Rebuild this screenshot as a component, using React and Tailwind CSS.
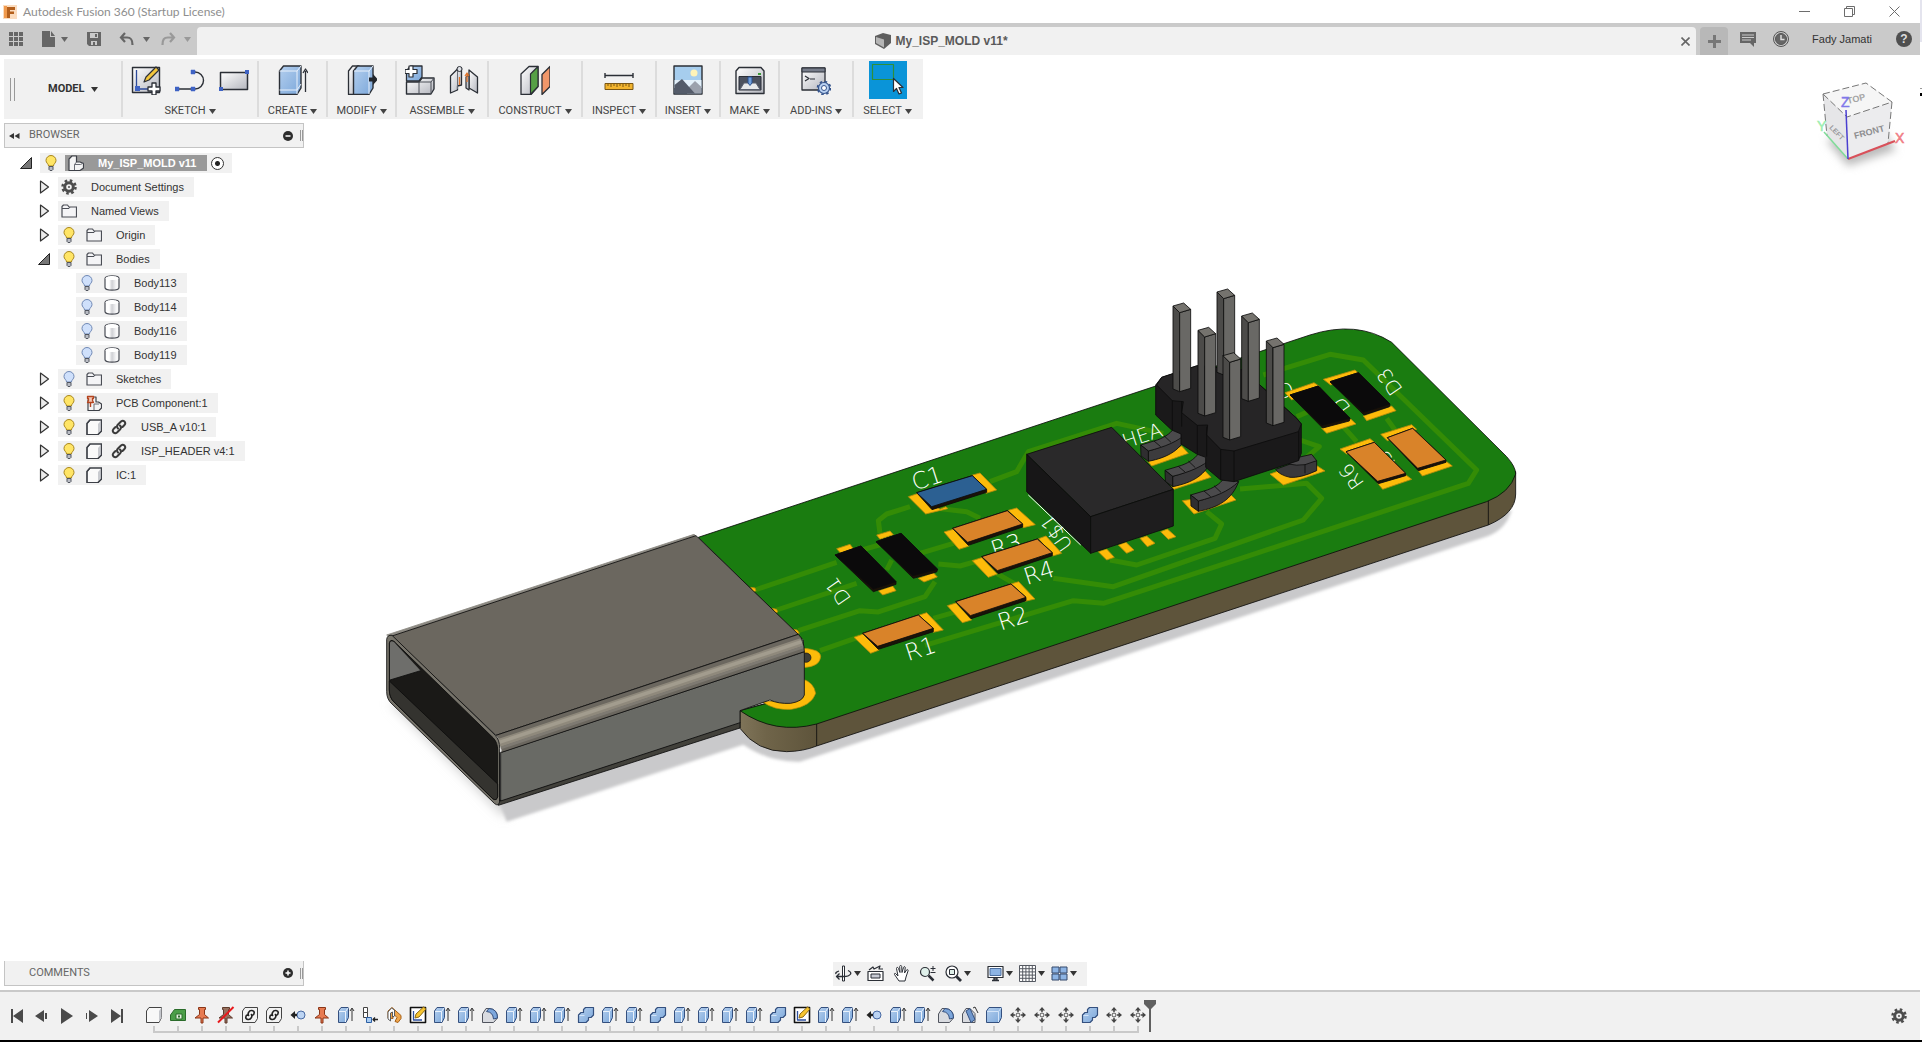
// ============================================================
// FUSION WORKSPACE
// Title bar, toolbar, browser tree, model canvas and timeline
// ============================================================

import { useState } from 'react';

// ---------- shared bits ----------

const Caret = ({ className = '' }) => (
  <svg viewBox="0 0 7 5" className={`w-[7px] h-[5px] shrink-0 ${className}`} fill="currentColor">
    <path d="M0 0h7L3.5 5z" />
  </svg>
);

const Svg = ({ size = 30, className = '', children }) => (
  <svg
    viewBox={`0 0 ${size} ${size}`}
    width={size}
    height={size}
    className={`shrink-0 ${className}`}
    fill="none"
    stroke="#2b2f36"
    strokeLinejoin="round"
  >
    {children}
  </svg>
);

const Gradients = () => (
  <svg className="absolute w-0 h-0" aria-hidden="true">
    <defs>
      <linearGradient id="blue" x1="0" y1="0" x2="1" y2="1">
        <stop offset="0" stopColor="#b4cfee" />
        <stop offset="1" stopColor="#7ba7da" />
      </linearGradient>
      <linearGradient id="grey" x1="0" y1="0" x2="1" y2="1">
        <stop offset="0" stopColor="#ffffff" />
        <stop offset="1" stopColor="#b4b6be" />
      </linearGradient>
      <linearGradient id="cylinder" x1="0" y1="0" x2="1" y2="0">
        <stop offset="0.3" stopColor="#ffffff" />
        <stop offset="0.5" stopColor="#cfd0d4" />
        <stop offset="0.8" stopColor="#f7f7f8" />
      </linearGradient>
    </defs>
  </svg>
);

// ---------- toolbar icons ----------

const SketchIcon = () => (
  <Svg>
    <path d="M1.500 2.500h27v25h-27z" fill="url(#grey)" strokeWidth="1.4" />
    <path d="M5.500 5v19H17" stroke="#2c4a9a" strokeWidth="1.3" />
    <path d="M4 21h5v5H4z" fill="#3f63c4" stroke="none" />
    <path d="M13 17l2-5L25 2l3 3-10 10z" fill="#f3c63c" strokeWidth="1.2" />
    <path d="M21 18h4v4h4v4h-4v4h-4v-4h-4v-4h4z" fill="#fff" strokeWidth="1.3" />
  </Svg>
);

const LineIcon = () => (
  <Svg>
    <path d="M2 24h18a8.500 8.500 0 0 0 0-17h-2" strokeWidth="1.4" />
    <path d="M0 22h4v4H0zM16 22h4v4h-4zM16 5h4v4h-4z" fill="#3f63c4" stroke="#3f63c4" strokeWidth="0.5" />
  </Svg>
);

const RectIcon = () => (
  <Svg>
    <path d="M1.500 7.500h27v17h-27z" fill="url(#grey)" strokeWidth="1.5" />
    <path d="M0 22h4v4H0zM26 5h4v4h-4z" fill="#3f63c4" stroke="none" />
  </Svg>
);

const CreateIcon = () => (
  <Svg>
    <path d="M1.500 6l4-5H23v22l-4 6.500H1.500z" fill="url(#blue)" strokeWidth="1.4" />
    <path d="M1.500 6H19v23M19 6l4-5M1.500 25H19l4-6" stroke="#e9f1fb" />
    <path d="M27.500 27V6M25 8l2.500-4L30 8" strokeWidth="1.300" />
  </Svg>
);

const ModifyIcon = () => (
  <Svg>
    <path d="M1.500 6l4-5H12v22l-4 6.500H1.500z" fill="url(#grey)" strokeWidth="1.3" />
    <path d="M6.500 6l4-5H26v22l-4 6.500H6.500z" fill="url(#blue)" strokeWidth="1.4" />
    <path d="M7 6h15v23M22 6l4-5" stroke="#e9f1fb" />
    <path d="M22 12.500h4V9l5 5.500-5 5.500v-3.500h-4z" fill="#22262c" stroke="none" />
  </Svg>
);

const AssembleIcon = () => (
  <Svg>
    <path d="M1.500 6l4-5H17v11l-3 4H1.500z" fill="url(#blue)" strokeWidth="1.3" />
    <path d="M14 17l3-4h12v11l-3 5H1.500V17z" fill="url(#grey)" strokeWidth="1.4" />
    <path d="M14 17v12M14 17h12l3-4M26 17v12" stroke="#4a4e57" />
    <path d="M4 1h4v3.500h4v4H8V12H4V8.500H0v-4h4z" fill="#fff" strokeWidth="1.2" />
  </Svg>
);

const JointIcon = () => (
  <Svg>
    <path d="M1.500 11l7-7 4-1v17l-4 1v4l-7 3z" fill="url(#grey)" strokeWidth="1.300" />
    <path d="M20 5l8.500 7v16L20 23z" fill="url(#grey)" strokeWidth="1.300" />
    <path d="M20 10l-3 2v11l3 2z" fill="#c5c8cf" strokeWidth="1.200" />
    <path d="M8.500 4v20" stroke="#6a6e77" />
    <ellipse cx="10.500" cy="4" rx="2.500" ry="2.500" fill="#dfe1e6" />
    <path d="M10.500 20V12M18 17V9M16 11l2-3 2 3" stroke="#e0752d" strokeWidth="1.300" />
  </Svg>
);

const ConstructIcon = () => (
  <Svg>
    <path d="M1 9l8-7.500h9v20L11 29.500H1z" fill="url(#grey)" strokeWidth="1.3" />
    <path d="M10.500 9L18 1.500v20l-7.500 8z" fill="#56a046" strokeWidth="1.2" />
    <path d="M22 9.500l8-8v20l-8 8z" fill="#f0976a" strokeWidth="1.3" />
  </Svg>
);

const InspectIcon = () => (
  <Svg>
    <path d="M1 8v5M29 8v5M1 10.500h28" strokeWidth="1.400" />
    <path d="M1 18.500h28v6H1z" fill="#f2b42e" stroke="#7a5613" />
    <path d="M4 19v2M7 19v3M10 19v2M13 19v3M16 19v2M19 19v3M22 19v2M25 19v3" stroke="#7a5613" />
  </Svg>
);

const InsertIcon = () => (
  <Svg>
    <path d="M1 1h28v28H1z" fill="#a6cdee" strokeWidth="1.400" />
    <path d="M1.500 15h27v8h-27z" fill="#e3f0fa" stroke="none" />
    <circle cx="21" cy="8" r="3.500" fill="#fff3b8" stroke="none" />
    <path d="M14 24l8-8 6.500 6v6.500H14z" fill="#9ba1ad" stroke="none" />
    <path d="M1.500 20L9 14l13 14.500H1.500z" fill="#545b69" stroke="none" />
  </Svg>
);

const MakeIcon = () => (
  <Svg>
    <path d="M1 6l3-3.500h22L29 6v22.500H1z" fill="url(#grey)" strokeWidth="1.400" />
    <path d="M4 11.500h22V25H4z" fill="#4b5160" />
    <path d="M9 18h12l4 6.500H5z" fill="#e6e8ec" stroke="#5a6070" />
    <path d="M13 12h4v6l-2 2.500-2-2.500z" fill="#6f9fdd" stroke="#2b4f8d" />
    <path d="M23 8h3v2h-3z" fill="#3c9a3a" stroke="none" />
  </Svg>
);

const AddInsIcon = () => (
  <Svg>
    <path d="M1 3h23v22H1z" fill="url(#grey)" strokeWidth="1.300" />
    <path d="M1 3h23v4H1z" fill="#767c8a" />
    <path d="M4 11l4 2.500L4 16M9 14h5" strokeWidth="1.200" />
    <circle cx="23" cy="23" r="5.500" fill="#b8d0f0" stroke="#35548c" strokeWidth="1.200" />
    <circle cx="23" cy="23" r="6.500" stroke="#35548c" strokeWidth="1.600" strokeDasharray="2.500 2.600" />
    <circle cx="23" cy="23" r="2.500" fill="#fff" stroke="#35548c" />
  </Svg>
);

const SelectIcon = () => (
  <Svg size={38} className="bg-[#0a94d8]">
    <path d="M3.500 3.500h21v15h-21z" stroke="#2f8f3a" strokeWidth="1.200" />
    <path d="M24.500 17.500v13l3-3 2.500 5.500 2.500-1-2.500-5.500h4z" fill="#fff" strokeWidth="1.200" />
  </Svg>
);

const TOOL_GROUPS = [
  { name: 'SKETCH', icons: [SketchIcon, LineIcon, RectIcon], width: 'w-[136px]' },
  { name: 'CREATE', icons: [CreateIcon], width: 'w-[69px]' },
  { name: 'MODIFY', icons: [ModifyIcon], width: 'w-[69px]' },
  { name: 'ASSEMBLE', icons: [AssembleIcon, JointIcon], width: 'w-[92px]' },
  { name: 'CONSTRUCT', icons: [ConstructIcon], width: 'w-[94px]' },
  { name: 'INSPECT', icons: [InspectIcon], width: 'w-[74px]' },
  { name: 'INSERT', icons: [InsertIcon], width: 'w-[64px]' },
  { name: 'MAKE', icons: [MakeIcon], width: 'w-[59px]' },
  { name: 'ADD-INS', icons: [AddInsIcon], width: 'w-[74px]' },
  { name: 'SELECT', icons: [SelectIcon], width: 'w-[69px]' },
];

// ---------- browser tree icons ----------

const Bulb = ({ on = true }) => (
  <Svg size={16}>
    <path
      d="M8 .5a5 5 0 0 0-5 5c0 2.500 2.300 3 2.600 5.500h4.800C10.700 8.500 13 8 13 5.500a5 5 0 0 0-5-5z"
      fill={on ? '#ffe566' : '#cfe0fb'}
      stroke={on ? '#a8861c' : '#6f88b5'}
    />
    <path d="M6 11.500h4v3l-1 1H7l-1-1z" fill="#b9bcc4" stroke="#50545e" />
  </Svg>
);

const Folder = () => (
  <Svg size={16}>
    <path d="M1 14V3.500L2.500 2h4L8 4h7.500v10z" fill="#f4f4f6" stroke="#4a4d55" strokeWidth="1.200" />
    <path d="M1 5.500h7L9 4" stroke="#4a4d55" />
  </Svg>
);

const Cylinder = () => (
  <Svg size={16}>
    <path d="M1 3.500C1 0 15 0 15 3.500v9c0 3.500-14 3.500-14 0z" fill="url(#cylinder)" stroke="#4a4d55" strokeWidth="1.200" />
    <path d="M1.500 3.500C1.500 0 14.500 0 14.500 3.500c0 2-13 2-13 0z" fill="#fff" stroke="none" />
  </Svg>
);

const Box = () => (
  <Svg size={16}>
    <path d="M1 4.500L4 1h11.500v11L12 15.500H1z" fill="#fafafa" stroke="#3d4047" strokeWidth="1.200" />
    <path d="M12 5v10.500L15.500 12V1z" fill="#c9cbd0" stroke="none" />
    <path d="M1 4.500L4 1h11.500v11L12 15.500H1z" stroke="#3d4047" strokeWidth="1.200" />
  </Svg>
);

const Component = () => (
  <Svg size={16}>
    <path d="M1 4l3-3h4.500v6H12l3.500 1.500V13L12 15.500H1z" fill="#f4f4f4" stroke="#3d4047" strokeWidth="1.200" />
    <path d="M6.500 15V9.500L8.500 7M6.500 9.500h6l3-1.500" stroke="#6a6d75" />
  </Svg>
);

const PinnedComponent = () => (
  <Svg size={16}>
    <path d="M2 5l3-3h5v5h2.500l3 2v4L13 15.500H2z" fill="#f4f4f4" stroke="#3d4047" strokeWidth="1.200" />
    <path d="M8 15V9h5" stroke="#6a6d75" />
    <path d="M1.500 1.500h6v2h-1v2l1 2h-6l1-2v-2h-1z" fill="#f4c9b8" stroke="#b4441f" strokeWidth="1.300" />
    <path d="M4.500 8v4" stroke="#b4441f" strokeWidth="1.400" />
  </Svg>
);

const Gear = ({ size = 16 }) => (
  <svg viewBox="0 0 16 16" width={size} height={size} fill="none" stroke="#4d4d4d" className="shrink-0">
    <circle cx="8" cy="8" r="4.300" strokeWidth="3" />
    <circle cx="8" cy="8" r="6.500" strokeWidth="2.500" strokeDasharray="2.550 2.550" />
    <circle cx="8" cy="8" r="1" fill="#4d4d4d" stroke="none" />
  </svg>
);

const Link = () => (
  <Svg size={16}>
    <g stroke="#3b3b3b" strokeWidth="2" strokeLinecap="round">
      <path d="M7 9.500C5.500 8 6 6.500 7 5.500l3-3c2.500-2 5.500 1 3.500 3.500l-2 2" />
      <path d="M9 6.500c1.500 1.500 1 3 0 4l-3 3c-2.500 2-5.500-1-3.500-3.500l2-2" />
    </g>
  </Svg>
);

const TREE = [
  { name: 'Document Settings', level: 1, arrow: 'closed', icons: [Gear] },
  { name: 'Named Views', level: 1, arrow: 'closed', icons: [Folder] },
  { name: 'Origin', level: 1, arrow: 'closed', bulb: 'on', icons: [Folder] },
  { name: 'Bodies', level: 1, arrow: 'open', bulb: 'on', icons: [Folder] },
  { name: 'Body113', level: 2, bulb: 'off', icons: [Cylinder] },
  { name: 'Body114', level: 2, bulb: 'off', icons: [Cylinder] },
  { name: 'Body116', level: 2, bulb: 'off', icons: [Cylinder] },
  { name: 'Body119', level: 2, bulb: 'off', icons: [Cylinder] },
  { name: 'Sketches', level: 1, arrow: 'closed', bulb: 'off', icons: [Folder] },
  { name: 'PCB Component:1', level: 1, arrow: 'closed', bulb: 'on', icons: [PinnedComponent] },
  { name: 'USB_A v10:1', level: 1, arrow: 'closed', bulb: 'on', icons: [Box, Link] },
  { name: 'ISP_HEADER v4:1', level: 1, arrow: 'closed', bulb: 'on', icons: [Box, Link] },
  { name: 'IC:1', level: 1, arrow: 'closed', bulb: 'on', icons: [Box] },
];

const Arrow = ({ kind }) => (
  <button aria-label={kind === 'open' ? 'Collapse' : 'Expand'} className="w-7 h-5 flex items-center justify-center">
    <Svg size={14}>
      {kind === 'open' ? (
        <path d="M12.500 1.500v11h-11z" fill="#777" stroke="#222" />
      ) : (
        <path d="M3.500 1l8 6-8 6z" fill="#ececec" stroke="#333" strokeWidth="1.200" />
      )}
    </Svg>
  </button>
);

function TreeRow({ item }) {
  return (
    <li className={`h-6 flex items-center ${item.level === 2 ? 'pl-12' : 'pl-[30px]'}`}>
      {item.arrow ? <Arrow kind={item.arrow} /> : <span className="w-7" />}
      <div className="h-5 flex items-center bg-[#f1f1f1] pr-2.5">
        {item.bulb && (
          <button aria-label={`Toggle ${item.name}`} className="w-[21px] flex justify-end pr-0.5">
            <Bulb on={item.bulb === 'on'} />
          </button>
        )}
        {item.icons.map((Icon, i) => (
          <span key={i} className={`flex justify-end ${i > 0 ? 'w-[25px]' : item.bulb ? 'w-[23px]' : 'w-[19px]'}`}>
            <Icon />
          </span>
        ))}
        <span className="pl-3.5 whitespace-nowrap">{item.name}</span>
      </div>
    </li>
  );
}

// ---------- title bar and document tabs ----------

function TitleBar() {
  return (
    <div className="h-[23px] flex items-center bg-white pl-[3px] pr-5">
      <svg viewBox="0 0 14 14" className="w-3.5 h-3.5">
        <path d="M0 0h14v14H0z" fill="#fbdcbf" />
        <path d="M4 2h8v3H7v1.500h4v2.500H7V13H4z" fill="#b35f1c" />
        <path d="M1 1h3v12H1z" fill="#f09a4d" />
      </svg>
      <h1 className="pl-1.5 flex-1 text-xs text-[#8e8e8e] font-['Lato',sans-serif]">
        Autodesk Fusion 360 (Startup License)
      </h1>
      <div className="flex items-center gap-[34px] text-[#6d6d6d]">
        <button aria-label="Minimize">
          <svg viewBox="0 0 11 11" className="w-[11px] h-[11px]" stroke="currentColor"><path d="M0 5.500h11" /></svg>
        </button>
        <button aria-label="Restore">
          <svg viewBox="0 0 11 11" className="w-[11px] h-[11px]" fill="none" stroke="currentColor">
            <path d="M.5 2.500h8v8h-8zM2.500 2.500v-2h8v8h-2" />
          </svg>
        </button>
        <button aria-label="Close">
          <svg viewBox="0 0 11 11" className="w-[11px] h-[11px]" stroke="currentColor"><path d="M.5.5l10 10M10.500.5l-10 10" /></svg>
        </button>
      </div>
    </div>
  );
}

function TabBar() {
  return (
    <div className="h-8 flex items-stretch bg-[#cacaca] text-[#666]">
      <div className="w-[197px] flex items-center pl-2 shrink-0">
        <button aria-label="Data panel">
          <svg viewBox="0 0 16 16" className="w-4 h-4" fill="currentColor">
            <path d="M1 1h4v4H1zM6 1h4v4H6zM11 1h4v4h-4zM1 6h4v4H1zM6 6h4v4H6zM11 6h4v4h-4zM1 11h4v4H1zM6 11h4v4H6zM11 11h4v4h-4z" />
          </svg>
        </button>
        <button aria-label="File" className="ml-[17px] flex items-center gap-1">
          <svg viewBox="0 0 16 16" className="w-4 h-4" fill="currentColor"><path d="M1 0h8v6h5v10H1zM10 0l4 5h-4z" /></svg>
          <Caret />
        </button>
        <button aria-label="Save" className="ml-[18px]">
          <svg viewBox="0 0 16 16" className="w-4 h-4" fill="currentColor" fillRule="evenodd">
            <path d="M1 1h14v14H3l-2-2zM4 2v5h8V2zM5 10v4h2v-3h2v3h2v-4zM9 3h2v3H9z" />
          </svg>
        </button>
        <button aria-label="Undo" className="ml-[17px] flex items-center gap-2">
          <svg viewBox="0 0 16 16" className="w-4 h-4" fill="none" stroke="currentColor" strokeWidth="2.200">
            <path d="M6 2L2 6.500 6 11M2.500 6.500H8c4 0 5.500 2 5.500 7.500" />
          </svg>
          <Caret />
        </button>
        <button aria-label="Redo" className="ml-2.5 flex items-center gap-2 text-[#999]">
          <svg viewBox="0 0 16 16" className="w-4 h-4" fill="none" stroke="currentColor" strokeWidth="2.200">
            <path d="M10 2l4 4.500-4 4.500M13.500 6.500H8c-4 0-5.500 2-5.500 7.500" />
          </svg>
          <Caret />
        </button>
      </div>

      {/* Active document */}
      <div className="flex-1 mt-1 flex items-center bg-[#f1f1f1] rounded-t-sm pr-1.5">
        <div className="flex-1 flex items-center justify-center gap-1 pl-1 text-[#5a5a5a]">
          <svg viewBox="0 0 17 16" className="w-[17px] h-4">
            <path d="M0 3l8-3 8 2v8l-7 6-9-5z" fill="#5f5f5f" />
            <path d="M1 4l8 2.500v8L1 10z" fill="#b5b5b5" />
          </svg>
          <span className="text-xs font-bold">My_ISP_MOLD v11*</span>
        </div>
        <button aria-label="Close document" className="w-[9px]">
          <svg viewBox="0 0 9 9" className="w-[9px] h-[9px]" stroke="currentColor" strokeWidth="1.600"><path d="M.5.5l8 8M8.500.5l-8 8" /></svg>
        </button>
      </div>

      <button aria-label="New document" className="mt-1 ml-1 w-7 flex items-center justify-center bg-[#b8b8b8] rounded-t-sm">
        <svg viewBox="0 0 13 13" className="w-[13px] h-[13px]" stroke="#777" strokeWidth="3"><path d="M6.500 0v13M0 6.500h13" /></svg>
      </button>
      <div className="flex items-center pl-3 pr-2">
        <button aria-label="Notifications">
          <svg viewBox="0 0 16 16" className="w-4 h-4">
            <path d="M0 1h16v11h-2v4l-4-4H0z" fill="#666" />
            <path d="M2 4h12M2 6.500h12M2 9h9" stroke="#cacaca" />
          </svg>
        </button>
        <button aria-label="Job status" className="ml-[17px]">
          <svg viewBox="0 0 16 16" className="w-4 h-4" fill="none" stroke="#555">
            <circle cx="8" cy="8" r="7.500" />
            <circle cx="8" cy="8" r="5.500" fill="#666" />
            <path d="M8 4v4.500h3.500" stroke="#ddd" strokeWidth="1.500" />
          </svg>
        </button>
        <button className="ml-[23px] text-[11px] text-[#333] whitespace-nowrap">Fady Jamati</button>
        <button aria-label="Help" className="ml-6 w-4 h-4 rounded-full bg-[#4f4f4f] text-[#ddd] text-xs leading-4 font-bold">?</button>
      </div>
    </div>
  );
}

function Toolbar() {
  return (
    <nav className="mt-1 ml-1 h-[60px] w-fit flex items-center bg-[#f1f1f1] font-['Roboto',sans-serif] text-[11px] text-[#444]">
      <div className="h-14 w-[119px] flex items-center border-r-2 border-[#dcdcdc]">
        <span className="ml-1.5 w-[5px] h-[23px] border-x border-[#999]" />
        <button className="ml-[33px] flex items-center gap-1.5 font-bold text-[#333]">
          MODEL <Caret />
        </button>
      </div>
      {TOOL_GROUPS.map((group) => (
        <div
          key={group.name}
          className={`h-14 flex flex-col items-center border-r-2 border-[#dcdcdc] last:border-transparent ${group.width}`}
        >
          <div className="h-[38px] shrink-0 flex items-center gap-3.5">
            {group.icons.map((Icon, i) => (
              <button key={i} className="flex" aria-label={`${group.name} tool ${i + 1}`}>
                <Icon />
              </button>
            ))}
          </div>
          <button className="h-3 mt-1.5 shrink-0 flex items-center gap-[3px] whitespace-nowrap">
            {group.name} <Caret />
          </button>
        </div>
      ))}
    </nav>
  );
}

function Browser() {
  return (
    <aside className="w-[300px] mt-1 ml-1">
      <div className="h-[25px] flex items-center bg-[#f1f1f1] border border-[#c4c4c4] font-['Roboto',sans-serif] text-[11px] text-[#666]">
        <button aria-label="Collapse browser" className="ml-1">
          <svg viewBox="0 0 11 6" className="w-[11px] h-1.5" fill="#333"><path d="M5 0v6L0 3zM10.500 0v6l-5-3z" /></svg>
        </button>
        <h2 className="ml-[9px] flex-1">BROWSER</h2>
        <button aria-label="Hide all">
          <svg viewBox="0 0 10 10" className="w-2.5 h-2.5"><circle cx="5" cy="5" r="5" fill="#2d2d2d" /><path d="M2.500 5h5" stroke="#fff" strokeWidth="1.500" /></svg>
        </button>
        <span className="ml-[7px] w-[3px] h-[11px] border-x border-[#999]" />
      </div>
      <ul className="mt-[3px] -ml-1 text-[11px] text-[#333]">
        <li className="h-6 flex items-center pl-3">
          <Arrow kind="open" />
          <div className="h-5 flex items-center bg-[#f1f1f1] pr-2">
            <button aria-label="Toggle root component" className="w-[21px] flex justify-end pr-0.5">
              <Bulb />
            </button>
            <span className="ml-1 h-4 flex items-center bg-[#999] pl-[3px] pr-[11px] text-white font-bold whitespace-nowrap">
              <Component />
              <span className="pl-3.5">My_ISP_MOLD v11</span>
            </span>
            <input
              type="radio"
              name="active-component"
              aria-label="Activate component"
              defaultChecked
              className="ml-1 appearance-none w-[13px] h-[13px] rounded-full border border-[#333] bg-white bg-[radial-gradient(circle,#222_2px,transparent_3px)]"
            />
          </div>
        </li>
        {TREE.map((item) => (
          <TreeRow key={item.name} item={item} />
        ))}
      </ul>
    </aside>
  );
}

// ---------- model drawing ----------
// The board is drawn in units of a third of a pixel.

const Poly = ({ p, fill, line = '#0c0c0c' }) => (
  <polygon points={p} fill={fill} stroke={line} strokeWidth="2.500" strokeLinejoin="round" />
);

const Pads = ({ list }) => list.map((p) => <Poly key={p} p={p} fill="#fdbb0a" line="#b58a0c" />);

const Chip = ({ top, side, color }) => (
  <>
    <Poly p={side} fill="#1b1208" />
    <Poly p={top} fill={color} />
  </>
);

const Label = ({ x, y, r = -18, size = 70, children }) => (
  <text
    transform={`translate(${x} ${y}) rotate(${r})`}
    fontSize={size}
    fontWeight="200"
    fill="#fff"
    fontFamily="DejaVu Sans, sans-serif"
  >
    {children}
  </text>
);

const PinPost = ({ x, y, bottom }) => (
  <>
    <Poly p={`${x},${y} ${x + 20},${y + 20} ${x + 20},${bottom} ${x},${bottom - 8}`} fill="#4c4b49" />
    <Poly p={`${x + 20},${y + 20} ${x + 53},${y + 10} ${x + 53},${bottom - 10} ${x + 20},${bottom}`} fill="#696865" />
    <Poly p={`${x},${y} ${x + 32},${y - 9} ${x + 53},${y + 10} ${x + 20},${y + 20}`} fill="#75736e" />
  </>
);

const Leg = ({ x, y }) => (
  <g transform={`translate(${x} ${y})`} stroke="#0c0c0c" strokeWidth="2.500" strokeLinejoin="round">
    <path d="M115 543C165 530 195 512 212 492L236 485C215 540 175 562 115 574z" fill="#3c3b3d" />
    <path d="M92 525L132 513C160 505 180 492 192 475L236 485C205 515 165 530 115 543z" fill="#4b4a4c" />
    <path d="M92 525L115 543V574L93 558z" fill="#2f2e30" />
    <path d="M132 513L152 530M162 497L183 517" fill="none" />
  </g>
);

function UsbShell() {
  return (
    <g transform="translate(0 690)">
      <Pads list={['1142,262 1155,264 1158,272 1150,276', '1207,325 1220,328 1223,336 1215,340', '1268,388 1282,390 1288,400 1278,404']} />
      <path d="M1300 445Q1352 448 1352 470Q1350 500 1300 503z" fill="#fdbb0a" stroke="#b58a0c" strokeWidth="2" />
      <ellipse cx="1308" cy="473" rx="15" ry="14" fill="#3d3d36" stroke="#111" strokeWidth="2" />
      <path d="M1178 606Q1215 632 1265 628Q1325 618 1337 580Q1332 548 1300 538L1296 596z" fill="#fdbb0a" stroke="#b58a0c" strokeWidth="2" />
      <g stroke="#0c0c0c" strokeWidth="2.500" strokeLinejoin="round">
        <path d="M385 903L1110 666V684L385 916z" fill="#42413b" />
        <path d="M392 757L1303 455V585Q1298 604 1262 610Q1225 612 1200 600L1110 632V668L392 903z" fill="#696a65" />
        <path d="M50 405L972 103L978 108L66 410z" fill="#8d8a83" stroke="#8d8a83" />
        <path d="M66 408L978 107L1285 403L378 706z" fill="#6b675f" />
        <path d="M378 706L1285 403Q1303 420 1303 455L395 757Q393 722 378 706z" fill="#6b675f" stroke="none" />
        <path d="M384 717L1291 415L1299 438L391 741z" fill="#8f897c" stroke="none" />
        <path d="M386 722L1293 420L1297 430L389 732z" fill="#a29c8e" stroke="none" />
        <path d="M391 740L1299 437L1301 445L393 748z" fill="#7e7a72" stroke="none" />
        <path d="M378 706L1285 403Q1303 420 1303 455L395 757" fill="none" />
        {/* mouth of the connector */}
        <path d="M50 418Q52 404 66 406L376 706Q389 720 389 745V905Q386 920 374 911L66 612Q50 598 50 575z" fill="#77746b" />
        <path d="M58 430Q60 416 72 424L370 714Q383 728 383 750V890Q380 904 368 896L72 606Q58 592 58 570z" fill="#1a1917" />
        <path d="M60 428Q62 420 72 426L152 512L60 540z" fill="#6e6e6b" stroke="none" />
        <path d="M58 543L383 852V890Q380 904 368 896L72 606Q58 592 58 570z" fill="#34332f" />
        <path d="M60 540L152 512M389 757V905" fill="none" />
      </g>
    </g>
  );
}

function Board() {
  return (
    <>
      <path
        d="M1110 1322V1375Q1160 1445 1250 1445Q1300 1444 1340 1428L3355 765Q3437 730 3437 672V605L3350 600L1400 1240z"
        fill="url(#boardEdge)"
        stroke="#0c0c0c"
        strokeWidth="2.500"
      />
      <path d="M1340 1362V1428M3355 690V765" stroke="#0c0c0c" strokeWidth="2.500" />
      <path
        d="M985 802L2820 195Q2960 150 3065 217L3410 560Q3437 590 3437 612Q3420 668 3350 695L1340 1362Q1215 1395 1110 1322L1300 1270V1110z"
        fill="#1a7c10"
        stroke="#0c0c0c"
        strokeWidth="2.500"
      />
    </>
  );
}

const Traces = () => (
  <g fill="none" stroke="#348c06" strokeWidth="15" strokeLinejoin="round">
    <g transform="translate(1320 390)">
      <path d="M-165 570L80 487M-100 630L140 550M-35 692L150 632L205 636L345 590L375 545M30 752L150 710M370 655L440 635" />
      <path d="M345 736L790 602L880 610L1300 473L1975 250L2000 210L1660 -120L1560 -137L1360 -75" />
      <path d="M730 535L910 560L1480 360L1535 295L1490 250L1290 267" />
      <path d="M900 480L980 495L1215 415L1235 372L1190 335" />
      <path d="M540 245L620 215L655 155L920 70L1060 100M210 400L205 362L230 342L300 320M380 325L470 335L510 355" />
      <path d="M330 460L430 430M385 492L450 498L520 478M560 520L620 555M120 460L260 420M230 510L245 480" />
    </g>
    <path d="M2790 510L2848 530L2800 570M2920 470L2960 515M3050 445L3075 480M2780 440L2850 410" />
  </g>
);

function SmallParts() {
  return (
    <>
      <g transform="translate(1320 390)">
        <Pads
          list={[
            '295,290 325,280 390,328 408,320 413,326 347,342', '485,226 510,219 560,270 528,280',
            '402,396 430,388 478,438 447,448', '595,331 620,324 676,374 640,383',
            '412,617 438,609 485,660 457,668', '603,552 626,545 675,597 645,604',
            '132,712 160,702 208,750 182,760', '326,646 350,638 400,690 370,697',
            '80,446 120,433 130,446 92,460', '205,572 248,558 258,572 218,585',
            '200,405 240,393 250,404 210,418', '325,535 370,518 382,531 342,546',
            '865,455 890,447 913,472 890,480', '925,435 948,427 972,450 950,460',
            '990,415 1010,408 1035,430 1012,440', '1052,395 1072,387 1098,410 1075,418',
          ]}
        />
        <Label x={552} y={474}>R3</Label>
        <Label x={790} y={436} r={-125} size={60}>U$1</Label>
        <Pads list={['487,482 515,473 562,522 535,532', '686,416 708,408 755,460 728,468']} />
        <Label x={314} y={272}>C1</Label>
        <Chip color="#2c6092" side="320,278 487,227 530,268 530,277 366,329" top="320,278 487,227 530,268 365,320" />
        <Chip color="#d98329" side="428,385 592,332 638,372 638,381 475,436" top="428,385 592,332 638,372 473,427" />
        <Chip color="#d98329" side="515,470 682,417 727,458 727,467 565,521" top="515,470 682,417 727,458 562,512" />
        <Chip color="#d98329" side="437,605 603,552 648,592 648,602 483,656" top="437,605 603,552 648,592 481,647" />
        <Chip color="#d98329" side="158,700 325,645 370,685 370,695 205,748" top="158,700 325,645 370,685 203,739" />
        <Chip color="#0b0a0b" side="75,465 153,438 258,545 258,553 190,575" top="75,465 153,438 258,545 190,567" />
        <Chip color="#0b0a0b" side="198,425 273,400 383,508 380,516 310,535" top="198,425 273,400 383,508 308,527" />
        <Label x={294} y={784}>R1</Label>
        <Label x={572} y={692}>R2</Label>
        <Label x={650} y={556}>R4</Label>
        <Label x={125} y={596} r={-125} size={60}>D1</Label>
        <Label x={944} y={146} size={60}>HEA</Label>
        <path d="M655 285L812 435" stroke="#fff" strokeWidth="3" />
        <Poly p="650,163 905,82 1090,268 842,350" fill="#2a292a" />
        <Poly p="650,163 842,350 842,460 650,275" fill="#171617" />
        <Poly p="842,350 1090,268 1090,378 842,460" fill="#1e1d1e" />
      </g>
      <g transform="translate(2220 0)">
        <Label x={512} y={388} size={60}>D</Label>
        <Label x={724} y={414} r={-125} size={60}>D</Label>
        <Label x={874} y={600} r={-125} size={60}>R5</Label>
        <Pads
          list={[
            '525,368 612,338 630,350 545,390', '635,475 722,447 738,462 650,490',
            '640,328 735,300 748,312 662,345', '760,438 845,408 858,422 770,452',
            '690,537 780,506 797,520 710,552', '803,640 888,615 905,628 818,658',
            '812,493 905,464 920,478 832,512', '925,602 1010,575 1027,588 937,618',
          ]}
        />
        <Chip color="#0b0a0b" side="540,375 625,348 720,445 718,453 638,474" top="540,375 625,348 720,445 636,466" />
        <Chip color="#0b0a0b" side="660,335 745,308 840,402 838,410 762,435" top="660,335 745,308 840,402 760,427" />
        <Chip color="#d98329" side="708,545 793,517 887,610 887,617 805,641" top="708,545 793,517 887,610 803,634" />
        <Chip color="#d98329" side="832,503 908,475 1008,570 1008,577 925,602" top="832,503 908,475 1008,570 923,595" />
        <Label x={880} y={358} r={-125} size={60}>D3</Label>
        <Label x={764} y={640} r={-125} size={60}>R6</Label>
      </g>
    </>
  );
}

function PinHeader() {
  return (
    <g transform="translate(2220 0)">
      <Pads
        list={[
          '112,572 215,528 235,550 125,588', '185,648 285,603 303,622 192,658',
          '217,692 360,672 378,690 252,732', '480,612 520,598 622,588 645,603 520,645',
        ]}
      />
      <g stroke="#0c0c0c" strokeWidth="2.500" strokeLinejoin="round">
        <path d="M497 598L560 575L620 572V602Q570 625 540 622Q508 615 497 598z" fill="#3a393b" />
        <path d="M565 562L605 553L620 572L585 584Q560 588 535 582z" fill="#4a494b" />
        <path d="M585 584V610" />
      </g>
      <Leg x={0} y={0} />
      <Leg x={73} y={76} />
      <Leg x={150} y={150} />
      <g stroke="#0c0c0c" strokeWidth="2.500" strokeLinejoin="round">
        <path
          d="M137 345L155 322L262 287L400 300L560 445L574 462V550L565 572L372 635L332 630L287 592V562L260 552L213 522V492L185 480L137 435z"
          fill="#1a191a"
        />
        <path
          d="M140 345L155 322L262 287L400 300L560 445L574 462L565 485L372 543L332 538L290 495L293 465L262 466L215 428L220 395L187 392z"
          fill="#262526"
        />
        <path d="M187 392V480M215 395V470M262 466V550M290 470V560M332 538V630M372 543V635M566 485V572" fill="none" />
      </g>
      <PinPost x={321} y={66} bottom={315} />
      <PinPost x={189} y={108} bottom={365} />
      <PinPost x={395} y={138} bottom={394} />
      <PinPost x={264} y={181} bottom={438} />
      <PinPost x={469} y={213} bottom={467} />
      <PinPost x={339} y={257} bottom={510} />
    </g>
  );
}

function ModelCanvas() {
  return (
    <svg
      viewBox="0 55 1920 935"
      className="absolute inset-0 w-full h-full"
      role="img"
      aria-label="USB programmer board model"
    >
      <defs>
        <linearGradient id="boardEdge" gradientUnits="userSpaceOnUse" x1="1110" y1="0" x2="1340" y2="0">
          <stop offset="0" stopColor="#7f7459" />
          <stop offset="0.35" stopColor="#6f6449" />
          <stop offset="1" stopColor="#5e543b" />
        </linearGradient>
        <filter id="soft" x="-10%" y="-10%" width="120%" height="120%">
          <feGaussianBlur stdDeviation="5" />
        </filter>
        <filter id="softer" x="-30%" y="-30%" width="160%" height="160%">
          <feGaussianBlur stdDeviation="16" />
        </filter>
      </defs>
      <g transform="translate(370 270) scale(0.333333)">
        <path d="M60 1300L400 1640L500 1560L140 1270z" fill="#d4d4d4" filter="url(#softer)" />
        <path
          d="M385 1590L410 1655L1120 1424Q1200 1478 1290 1475L3355 798Q3410 775 3425 720L1300 1380L1100 1360z"
          fill="#c9c9cb"
          filter="url(#soft)"
        />
        <Board />
        <Traces />
        <SmallParts />
        <UsbShell />
        <PinHeader />
      </g>
    </svg>
  );
}

function ViewCube() {
  return (
    <svg
      viewBox="0 0 100 100"
      className="absolute right-2 top-[25px] w-[100px] h-[100px]"
      role="img"
      aria-label="View cube"
      fontFamily="Liberation Sans, Arial, sans-serif"
      fontWeight="bold"
    >
      <defs>
        <filter id="cubeShadow" x="-30%" y="-30%" width="160%" height="160%">
          <feGaussianBlur stdDeviation="4" />
        </filter>
      </defs>
      <path d="M14 60L36 86L84 70L70 50z" fill="#bbb" filter="url(#cubeShadow)" />
      <path d="M11 14L54 3L80 22L35 37z" fill="#f6f6f6" />
      <path d="M11 14L35 37L36 79L15 56z" fill="#e6e6e8" />
      <path d="M35 37L80 22L76 63L36 79z" fill="#ececee" />
      <path d="M11 14L54 3L80 22L35 37zL15 56M80 22L76 63" fill="none" stroke="#777" strokeDasharray="7 3" />
      <text x="36" y="24" fontSize="9" fill="#a5a5a5" transform="rotate(-14 36 24)">TOP</text>
      <text x="43" y="59" fontSize="9" fill="#8e8e90" transform="rotate(-15 43 59)">FRONT</text>
      <text x="17" y="48" fontSize="7" fill="#9a9a9c" transform="rotate(46 17 48)">LEFT</text>
      <path d="M36 79L12 52" stroke="#7fdc98" strokeWidth="1.500" />
      <path d="M36 79L83 61" stroke="#d9505a" strokeWidth="2" />
      <path d="M36 79L34 30" stroke="#4a3fd0" strokeWidth="1.500" />
      <g fontWeight="normal" fontSize="14">
        <text x="29" y="27" fill="#8078ea" stroke="#8078ea" strokeWidth="0.500">Z</text>
        <text x="5" y="51" fill="#9deeb0" stroke="#9deeb0" strokeWidth="0.500">Y</text>
        <text x="83" y="63" fill="#f07c84" stroke="#f07c84" strokeWidth="0.500">X</text>
      </g>
    </svg>
  );
}

// ---------- bottom bars ----------

const OrbitIcon = () => (
  <Svg size={17}>
    <path d="M7.500 1h2v15h-2z" fill="#fff" />
    <path d="M13 5.500c5 2 3 6-4.500 6H2M4.500 8.500L1.500 11.500l3 3M4 6C1 7 .5 8 1 9" strokeWidth="1.300" />
  </Svg>
);

const LookAtIcon = () => (
  <Svg size={17}>
    <path d="M1 6.500h15v9H1z" fill="#fff" strokeWidth="1.200" />
    <path d="M4 9h9v4H4z" fill="#c9ccd5" />
    <path d="M2 5l4-3 1 2 6-3-1 3h4" strokeWidth="1.200" />
  </Svg>
);

const PanIcon = () => (
  <Svg size={17}>
    <path
      d="M6 16L1.500 9.500c-.5-1.500 1-1.500 1.500-.5l2 2L3.500 3.500c0-1.500 1.500-1.500 2 0l1.500 4-.3-6c.3-1.500 1.700-1.500 2 0l.3 6 1.500-5c.5-1.500 2-1 1.700.5L11.500 8l2-3c1-1 2 0 1.500 1L13 12l-1 4z"
      fill="#fff"
    />
  </Svg>
);

const ZoomIcon = () => (
  <Svg size={17}>
    <circle cx="6" cy="7" r="4.500" fill="#dff0ea" strokeWidth="1.200" />
    <path d="M9.500 10.500l5 5" strokeWidth="2.500" />
    <path d="M11.500 3.500h5M14 1v5M11.500 7.500h5" />
  </Svg>
);

const FitIcon = () => (
  <Svg size={17}>
    <circle cx="7" cy="7" r="6" fill="#fff" strokeWidth="1.200" />
    <path d="M4.500 4.500h5v5h-5z" fill="#dff0ea" />
    <path d="M11.500 11.500l4.500 4.500" strokeWidth="2.800" />
  </Svg>
);

const DisplayIcon = () => (
  <Svg size={17}>
    <path d="M1 1.500h15v11H1z" fill="#fff" strokeWidth="1.200" />
    <path d="M3 3.500h11v7H3z" fill="#8db4e4" stroke="#4d6f9f" />
    <path d="M7 13h3v2H7zM5 15.500h7" strokeWidth="1.300" />
  </Svg>
);

const GridIcon = () => (
  <Svg size={17}>
    <path d="M.5.5h16v16H.5zM.5 3.700h16M.5 6.900h16M.5 10.100h16M.5 13.300h16M3.700.5v16M6.900.5v16M10.100.5v16M13.300.5v16" stroke="#555962" fill="#fff" />
  </Svg>
);

const ViewportsIcon = () => (
  <Svg size={17}>
    <path d="M1 2h7v6H1zM9 2h7v6H9zM1 9h7v6H1zM9 9h7v6H9z" fill="#8db4e4" stroke="#34486b" />
  </Svg>
);

const NAV_TOOLS = [
  { name: 'Orbit', Icon: OrbitIcon, menu: true, gap: '' },
  { name: 'Look at', Icon: LookAtIcon, gap: 'ml-1.5' },
  { name: 'Pan', Icon: PanIcon, gap: 'ml-[9px]' },
  { name: 'Zoom', Icon: ZoomIcon, gap: 'ml-[9px]' },
  { name: 'Fit', Icon: FitIcon, menu: true, gap: 'ml-[9px]' },
  { name: 'Display settings', Icon: DisplayIcon, menu: true, gap: 'ml-4' },
  { name: 'Grid and snaps', Icon: GridIcon, menu: true, gap: 'ml-1.5' },
  { name: 'Viewports', Icon: ViewportsIcon, menu: true, gap: 'ml-1.5' },
];

function BottomPanels() {
  return (
    <div className="relative mt-auto mb-1 grid grid-cols-[1fr_auto_1fr] items-center">
      <div className="ml-1 w-[300px] h-[25px] flex items-center bg-[#f1f1f1] border border-t-0 border-[#c4c4c4] font-['Roboto',sans-serif] text-[11px] text-[#666]">
        <h2 className="ml-6 flex-1">COMMENTS</h2>
        <button aria-label="Add comment">
          <svg viewBox="0 0 10 10" className="w-2.5 h-2.5">
            <circle cx="5" cy="5" r="5" fill="#2d2d2d" />
            <path d="M2.500 5h5M5 2.500v5" stroke="#fff" strokeWidth="1.500" />
          </svg>
        </button>
        <span className="ml-[7px] w-[3px] h-[11px] border-x border-[#999]" />
      </div>
      <div className="h-6 flex items-center bg-[#f1f1f1] pl-0.5 pr-2.5 text-[#333]">
        {NAV_TOOLS.map(({ name, Icon, menu, gap }) => (
          <button key={name} aria-label={name} className={`flex items-center gap-0.5 ${gap}`}>
            <Icon />
            {menu && <Caret />}
          </button>
        ))}
      </div>
    </div>
  );
}

const FEATURES = {
  box: (
    <>
      <path d="M1.500 5L4 1.500h12.500v10L14 16.500H1.500z" fill="#f8f8f8" stroke="#444" />
      <path d="M14 5l2.500-3.500v10L14 16z" fill="#c4c6cb" stroke="none" />
    </>
  ),
  board: (
    <>
      <path d="M1.500 9l4-5.500h11v11h-15z" fill="#4b9e48" stroke="#2a6b2a" />
      <path d="M7 8h6v5H7z" fill="#e6f3e0" stroke="#2a6b2a" />
      <path d="M9 9.500h2v2H9z" fill="#2a6b2a" stroke="none" />
    </>
  ),
  pin: <path d="M5.500 1.500h7v2h-1v5l4 3.500h-5.500v5h-2v-5h-6l4.500-3.500v-5h-1z" fill="#e77b52" stroke="#8a3517" />,
  unpin: (
    <>
      <path d="M5.500 1.500h7v2h-1v5l4 3.500h-5.500v5h-2v-5h-6l4.500-3.500v-5h-1z" fill="#98715f" stroke="#5e3b2c" />
      <path d="M1 16.500L16.500 1" stroke="#e8191c" strokeWidth="2" />
    </>
  ),
  link: (
    <>
      <path d="M1.500 5L4 1.500h12.500v11L14 16.500H1.500z" fill="#f2f2f2" stroke="#444" />
      <path d="M8 10c-2-2 0-6 3-5.500s3 4 0 5M10 8c2 2 0 6-3 5.500s-3-4 0-5" stroke="#222" strokeWidth="1.600" />
    </>
  ),
  joint: (
    <>
      <circle cx="12" cy="9" r="4" fill="#bcd4f3" stroke="#4869a3" />
      <path d="M8 9H5" stroke="#222" strokeWidth="2.500" />
      <path d="M6 5v8L1.500 9z" fill="#222" stroke="none" />
    </>
  ),
  extrude: (
    <>
      <path d="M1.500 5L4 1.500h7.500v10L9 16.500H1.500z" fill="url(#blue)" stroke="#34507f" />
      <path d="M2 5.500h6.500V16M8.500 5.500l3-4" stroke="#eaf2fc" />
      <path d="M15 15V3M13 5l2-3 2 3" stroke="#333" />
    </>
  ),
  pattern: (
    <>
      <path d="M2.500 1.500h4v5h-4zM2.500 6.500h4v5h-4z" fill="#fff" stroke="#444" />
      <path d="M5.500 11.500h5v5h-5z" fill="#a9cdf3" stroke="#2d5fa3" />
      <path d="M17 13.500h-5M14 11.500l-2 2 2 2" stroke="#222" strokeWidth="1.300" />
    </>
  ),
  bend: (
    <>
      <path d="M3 12V5l4-3.500 9 8v3l-3 4-3-1 2-4-4-4v5z" fill="#f0a64b" stroke="#a56019" />
      <path d="M3 13V6l3.500-4 3 2v6l-2 1V6l-2 1v8z" fill="#fff" stroke="#5c5c5c" />
    </>
  ),
  sketch: (
    <>
      <path d="M1.500 1.500h15v15h-15z" fill="#fff" stroke="#111" strokeWidth="1.600" />
      <path d="M4.500 5v9H13" stroke="#2d4f9e" strokeWidth="1.300" />
      <path d="M6 12l1-4 7.500-7L17 3l-7 8z" fill="#f7c531" stroke="#8c6a14" />
    </>
  ),
  fillet: (
    <>
      <path d="M1.500 16.500V8L5 2.500h3Q16.500 3 16.500 12l-4 4.500z" fill="#d9dbe0" stroke="#50545e" />
      <path d="M8 2.500Q16.500 3 16.500 12l-4 1Q12 6 5.500 5.500z" fill="#7da7dc" stroke="#34507f" />
    </>
  ),
  shell: (
    <>
      <path d="M1.500 16.500V8L5 2.500h4l5 5v9z" fill="#d9dbe0" stroke="#50545e" />
      <path d="M5 5l4-2.500 5 11-4 3z" fill="#6f97cd" stroke="#34507f" />
      <path d="M12 2l2-1 3 6" stroke="#333" />
    </>
  ),
  combine: (
    <>
      <path d="M1.500 9L4 6.500h2.500v-3L8.500 1.500h8v7.500L14 11.500h-2.500V14L9 16.500H1.500z" fill="url(#blue)" stroke="#34507f" strokeWidth="1.200" />
      <path d="M2.500 9.500h5" stroke="#d3e4f8" />
    </>
  ),
  solid: (
    <>
      <path d="M1.500 5L4 1.500h12.500v10L14 16.500H1.500z" fill="url(#blue)" stroke="#34507f" />
      <path d="M2 5.500h11.500V16M13.500 5.500l3-4" stroke="#d3e4f8" />
    </>
  ),
  move: (
    <>
      <circle cx="9" cy="9" r="2" stroke="#555" />
      <path d="M9 1l3 3.500H6zM9 17l3-3.500H6zM1 9l3.500-3v6zM17 9l-3.500-3v6z" fill="#444" stroke="none" />
      <path d="M9 4v2M9 12v2M4 9h2M12 9h2" stroke="#444" strokeWidth="1.500" />
    </>
  ),
};

const HISTORY = [
  'box', 'board', 'pin', 'unpin', 'link', 'link', 'joint', 'pin', 'extrude', 'pattern', 'bend',
  'sketch', 'extrude', 'extrude', 'fillet', 'extrude', 'extrude', 'extrude', 'combine', 'extrude',
  'extrude', 'combine', 'extrude', 'extrude', 'extrude', 'extrude', 'combine', 'sketch', 'extrude',
  'extrude', 'joint', 'extrude', 'extrude', 'fillet', 'shell', 'solid', 'move', 'move', 'move',
  'combine', 'move', 'move',
];

const PLAYBACK = [
  { name: 'Go to start', d: 'M2 1h2v14H2zM14 1v14L4 8z' },
  { name: 'Step back', d: 'M10 2v12L1 8zM11 5h2v6h-2z' },
  { name: 'Play', d: 'M2 0l12 8-12 8z' },
  { name: 'Step forward', d: 'M2 5h1v6H2zM5 2l9 6-9 6z' },
  { name: 'Go to end', d: 'M2 1l10 7-10 7zM12 1h2v14h-2z' },
];

function Timeline() {
  const [selected, setSelected] = useState(null);

  return (
    <footer className="h-[50px] shrink-0 flex items-center bg-[#f1f1f1] border-t-2 border-[#c9c9c9] pl-1 pr-[13px]">
      <div className="flex">
        {PLAYBACK.map((item) => (
          <button key={item.name} aria-label={item.name} className="w-[25px] flex justify-center">
            <svg viewBox="0 0 16 16" className="w-4 h-4" fill="#4a4a4a"><path d={item.d} /></svg>
          </button>
        ))}
      </div>
      <div className="ml-[13px] pt-3">
        <ul className="flex">
          {HISTORY.map((kind, i) => (
            <li key={i} className="w-6 flex flex-col items-center">
              <button aria-label={`${kind} feature ${i + 1}`} aria-pressed={selected === i} onClick={() => setSelected(i)}>
                <Svg size={18}>{FEATURES[kind]}</Svg>
              </button>
              <span className="mt-0.5 w-0.5 h-[5px] bg-[#c9c9c9]" />
            </li>
          ))}
        </ul>
        <div className="mx-[11px] mb-1.5 h-0.5 bg-[#c9c9c9]" />
      </div>
      <button aria-label="Timeline position" className="-ml-1.5">
        <svg viewBox="0 0 12 32" className="w-3 h-8" fill="#606060"><path d="M0 0h12v4L7 9v23H5V9L0 4z" /></svg>
      </button>
      <button aria-label="Timeline settings" className="ml-auto">
        <Gear />
      </button>
    </footer>
  );
}

export default function App() {
  return (
    <div className="min-h-screen flex bg-white font-['Liberation_Sans',Arial,sans-serif]">
      <Gradients />
      <div className="flex-1 min-w-0 flex flex-col">
        <TitleBar />
        <TabBar />
        <main className="relative flex-1 flex flex-col">
          <ModelCanvas />
          <ViewCube />
          <div className="relative">
            <Toolbar />
            <Browser />
          </div>
          <BottomPanels />
        </main>
        <Timeline />
        <div className="h-0.5 bg-black" />
      </div>

      {/* Sliver of the neighbouring window */}
      <div className="w-0.5 flex flex-col">
        <span className="h-[42px] bg-[#e4e4ee]" />
        <span className="mt-[46px] h-px bg-[#999]" />
        <span className="mt-1 h-[3px] bg-black" />
        <span className="mt-auto h-0.5 bg-black" />
      </div>
    </div>
  );
}
